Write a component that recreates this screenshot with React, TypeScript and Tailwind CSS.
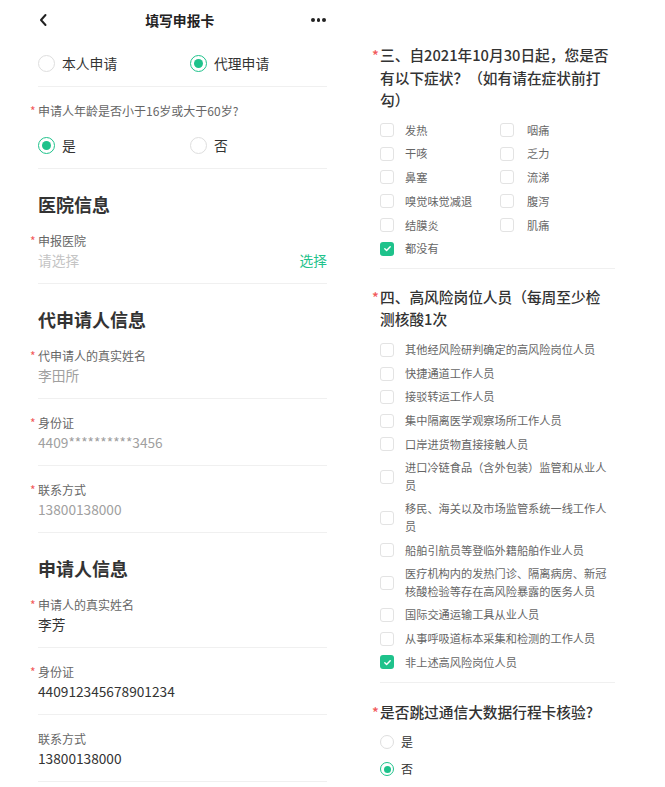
import React from 'react';

const GREEN = '#1ec28b';

function Radio({ checked, small }: { checked?: boolean; small?: boolean }) {
    const size = small ? 'h-[14px] w-[14px]' : 'h-[17px] w-[17px]';
    if (checked) {
        return (
            <span className={`${size} flex shrink-0 items-center justify-center rounded-full border-[1.5px] border-[#1ec28b]`}>
                <span className={`${small ? 'h-[7px] w-[7px]' : 'h-[9px] w-[9px]'} rounded-full bg-[#1ec28b]`} />
            </span>
        );
    }
    return <span className={`${size} shrink-0 rounded-full border border-[#dedede]`} />;
}

function Check({ checked }: { checked?: boolean }) {
    if (checked) {
        return (
            <span className="flex h-[14px] w-[14px] shrink-0 items-center justify-center rounded-[3px] bg-[#1ec28b]">
                <svg width="9" height="9" viewBox="0 0 10 10" fill="none">
                    <path d="M2 5.2l2 2L8 3" stroke="white" strokeWidth="1.6" strokeLinecap="round" strokeLinejoin="round" />
                </svg>
            </span>
        );
    }
    return <span className="h-[14px] w-[14px] shrink-0 rounded-[3px] border border-[#e3e3e3]" />;
}

function Star({ big }: { big?: boolean }) {
    return big ? (
        <span className="-ml-[8px] inline-block w-[8px] text-[14px] text-[#f25a5a]">*</span>
    ) : (
        <span className="-ml-[8px] w-[8px] text-[12px] text-[#f25a5a]">*</span>
    );
}

function Field({ label, value, required = true, tone = 'gray' }: { label: string; value: string; required?: boolean; tone?: 'gray' | 'dark' }) {
    return (
        <div className="border-b border-[#f0f0f0] pt-[16px] pb-[13px]">
            <div className="flex h-[16px] items-center text-[12px] leading-[16px] text-[#666]">
                {required ? <Star /> : null}
                <span>{label}</span>
            </div>
            <div className={`mt-[1px] text-[13.7px] leading-[20px] ${tone === 'dark' ? 'text-[#333]' : 'text-[#a0a0a0]'}`}>{value}</div>
        </div>
    );
}

function SectionTitle({ children }: { children: React.ReactNode }) {
    return <div className="pt-[22px] text-[18px] font-semibold leading-[26px] text-[#333]">{children}</div>;
}

function Question({ children, className = '' }: { children: React.ReactNode; className?: string }) {
    return <div className={`w-[240px] text-[14.7px] font-medium leading-[22.5px] text-[#333] ${className}`}>{children}</div>;
}

const symptoms: [string, string][] = [
    ['发热', '咽痛'],
    ['干咳', '乏力'],
    ['鼻塞', '流涕'],
    ['嗅觉味觉减退', '腹泻'],
    ['结膜炎', '肌痛'],
];

const risks: { text: string; checked?: boolean }[] = [
    { text: '其他经风险研判确定的高风险岗位人员' },
    { text: '快捷通道工作人员' },
    { text: '接驳转运工作人员' },
    { text: '集中隔离医学观察场所工作人员' },
    { text: '口岸进货物直接接触人员' },
    { text: '进口冷链食品（含外包装）监管和从业人员' },
    { text: '移民、海关以及市场监管系统一线工作人员' },
    { text: '船舶引航员等登临外籍船舶作业人员' },
    { text: '医疗机构内的发热门诊、隔离病房、新冠核酸检验等存在高风险暴露的医务人员' },
    { text: '国际交通运输工具从业人员' },
    { text: '从事呼吸道标本采集和检测的工作人员' },
    { text: '非上述高风险岗位人员', checked: true },
];

export default function App() {
    return (
        <div className="flex h-[787px] w-[665px] overflow-hidden bg-white" style={{ fontFamily: '"Noto Sans CJK SC", "Noto Sans", sans-serif' }}>
            {/* left phone */}
            <div className="w-[345px] shrink-0 pl-[38px] pr-[18px]">
                <div className="flex h-[40px] items-center justify-between">
                    <svg width="10" height="14" viewBox="0 0 10 14" fill="none">
                        <path d="M7.5 2L3 7l4.5 5" stroke="#222" strokeWidth="2" strokeLinecap="round" strokeLinejoin="round" />
                    </svg>
                    <span className="text-[13.8px] font-semibold text-[#222]">填写申报卡</span>
                    <span className="flex gap-[2px] pr-[1px]">
                        <span className="h-[3.5px] w-[3.5px] rounded-full bg-[#222]" />
                        <span className="h-[3.5px] w-[3.5px] rounded-full bg-[#222]" />
                        <span className="h-[3.5px] w-[3.5px] rounded-full bg-[#222]" />
                    </span>
                </div>

                <div className="grid h-[47px] grid-cols-[152px_1fr] items-center border-b border-[#f0f0f0] text-[13.8px] text-[#333]">
                    <div className="flex items-center gap-[7px]">
                        <Radio />
                        <span>本人申请</span>
                    </div>
                    <div className="flex items-center gap-[7px]">
                        <Radio checked />
                        <span>代理申请</span>
                    </div>
                </div>

                <div className="border-b border-[#f0f0f0] pt-[16px] pb-[10px]">
                    <div className="flex h-[16px] items-center text-[12px] leading-[16px] text-[#666]">
                        <Star />
                        <span>申请人年龄是否小于16岁或大于60岁?</span>
                    </div>
                    <div className="mt-[13px] grid h-[26px] grid-cols-[152px_1fr] items-center text-[13.8px] text-[#333]">
                        <div className="flex items-center gap-[7px]">
                            <Radio checked />
                            <span>是</span>
                        </div>
                        <div className="flex items-center gap-[7px]">
                            <Radio />
                            <span>否</span>
                        </div>
                    </div>
                </div>

                <SectionTitle>医院信息</SectionTitle>
                <div className="border-b border-[#f0f0f0] pt-[16px] pb-[13px]">
                    <div className="flex h-[16px] items-center text-[12px] leading-[16px] text-[#666]">
                        <Star />
                        <span>申报医院</span>
                    </div>
                    <div className="mt-[1px] flex justify-between text-[13.7px] leading-[20px]">
                        <span className="text-[#c4c4c4]">请选择</span>
                        <span style={{ color: GREEN }}>选择</span>
                    </div>
                </div>

                <SectionTitle>代申请人信息</SectionTitle>
                <Field label="代申请人的真实姓名" value="李田所" />
                <Field label="身份证" value="4409**********3456" />
                <Field label="联系方式" value="13800138000" />

                <SectionTitle>申请人信息</SectionTitle>
                <Field label="申请人的真实姓名" value="李芳" tone="dark" />
                <Field label="身份证" value="440912345678901234" tone="dark" />
                <Field label="联系方式" value="13800138000" tone="dark" required={false} />
            </div>

            {/* right phone */}
            <div className="w-[270px] shrink-0 pl-[35px] pt-[44px]">
                <Question>
                    <Star big />
                    三、自2021年10月30日起，您是否
                    <br />
                    有以下症状？（如有请在症状前打
                    <br />
                    勾）
                </Question>
                <div className="w-[235px] border-b border-[#f0f0f0] pt-[6.5px] pb-[7px] text-[11.2px] text-[#666]">
                    {symptoms.map(([a, b]) => (
                        <div key={a} className="grid h-[23.8px] grid-cols-[120px_1fr] items-center">
                            <div className="flex items-center gap-[11px]">
                                <Check />
                                <span>{a}</span>
                            </div>
                            <div className="flex items-center gap-[13px]">
                                <Check />
                                <span>{b}</span>
                            </div>
                        </div>
                    ))}
                    <div className="flex h-[23.8px] items-center gap-[11px]">
                        <Check checked />
                        <span>都没有</span>
                    </div>
                </div>

                <Question className="pt-[17px]">
                    <Star big />
                    四、高风险岗位人员（每周至少检
                    <br />
                    测核酸1次
                </Question>
                <div className="w-[235px] border-b border-[#f0f0f0] pt-[7.5px] pb-[8px] text-[11.2px] leading-[17.6px] text-[#666]">
                    {risks.map((r) => (
                        <div key={r.text} className="flex items-center gap-[11px] py-[3px]">
                            <Check checked={r.checked} />
                            <span className="w-[205px]">{r.text}</span>
                        </div>
                    ))}
                </div>

                <Question className="pt-[18px]">
                    <Star big />
                    是否跳过通信大数据行程卡核验?
                </Question>
                <div className="pt-[5px] text-[12px] text-[#333]">
                    <div className="flex h-[27px] items-center gap-[7px]">
                        <Radio small />
                        <span>是</span>
                    </div>
                    <div className="flex h-[27px] items-center gap-[7px]">
                        <Radio small checked />
                        <span>否</span>
                    </div>
                </div>
            </div>
        </div>
    );
}
